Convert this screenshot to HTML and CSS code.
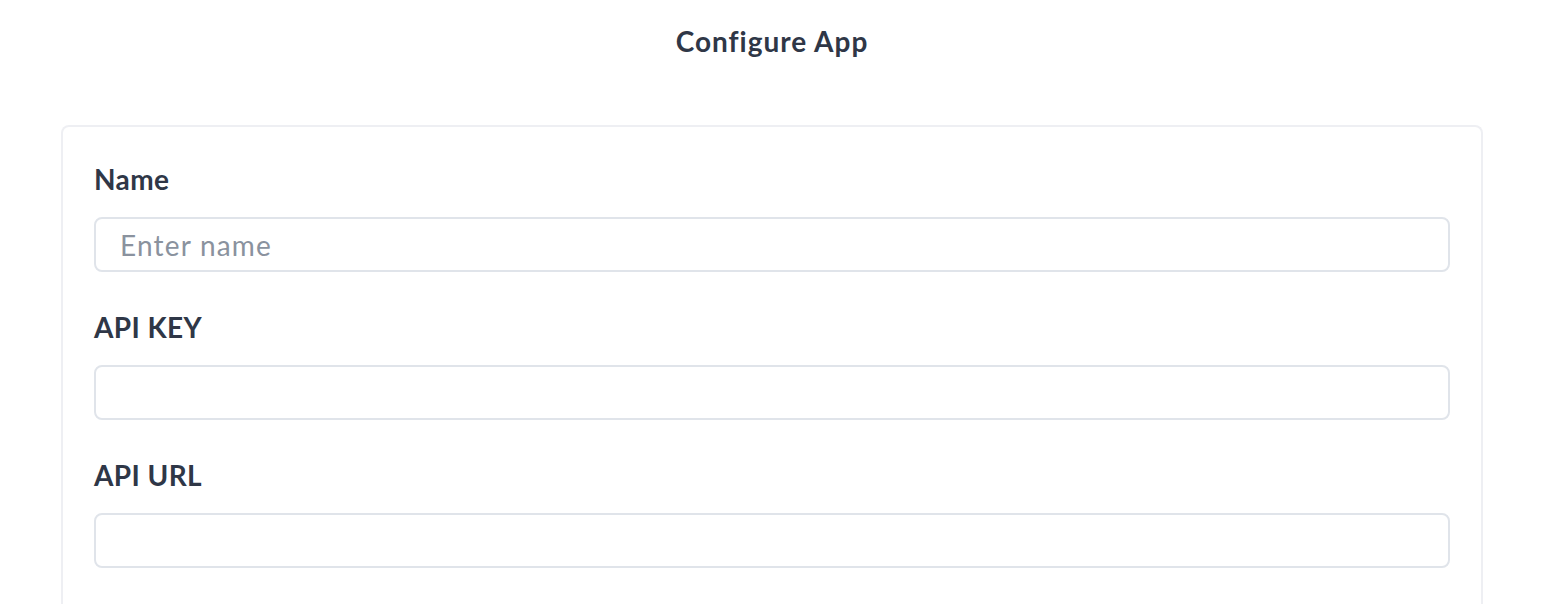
FILE: index.html
```html
<!DOCTYPE html>
<html lang="en">
<head>
<meta charset="utf-8">
<title>Configure App</title>
<link rel="stylesheet" href="styles.css">
</head>
<body>
  <h1 class="page-title">Configure App</h1>
  <div class="card">
    <div class="field">
      <label class="field-label" for="name">Name</label>
      <input class="field-input" id="name" type="text" placeholder="Enter name">
    </div>
    <div class="field">
      <label class="field-label" for="apikey">API KEY</label>
      <input class="field-input" id="apikey" type="text">
    </div>
    <div class="field">
      <label class="field-label" for="apiurl">API URL</label>
      <input class="field-input" id="apiurl" type="text">
    </div>
  </div>
</body>
</html>
```
FILE: styles.css
```css
html, body {
  margin: 0;
  padding: 0;
  background: #ffffff;
  font-family: Lato, "Noto Sans", sans-serif;
  color: #2f3747;
}

.page-title {
  margin: 0;
  padding-top: 20px;
  font-size: 28px;
  line-height: 42px;
  font-weight: 700;
  letter-spacing: 1px;
  text-align: center;
  color: #2f3747;
}

.card {
  margin: 63px 61px 0 61px;
  padding: 31px 31px 60px 31px;
  border: 2px solid #eeeff3;
  border-bottom: none;
  border-radius: 8px 8px 0 0;
  min-height: 420px;
}

.field {
  display: flex;
  flex-direction: column;
  margin-bottom: 34px;
}

.field-label {
  font-size: 28px;
  line-height: 42px;
  font-weight: 700;
  letter-spacing: 0.4px;
  color: #2f3747;
  margin-bottom: 17px;
}

.field-input {
  box-sizing: border-box;
  height: 55px;
  width: 100%;
  border: 2px solid #e0e4ea;
  border-radius: 8px;
  padding: 0 24px;
  font-family: Lato, "Noto Sans", sans-serif;
  font-size: 28px;
  letter-spacing: 1.2px;
  color: #2f3747;
  background: #fff;
  outline: none;
}

.field-input::placeholder {
  color: #8a929e;
}
```
